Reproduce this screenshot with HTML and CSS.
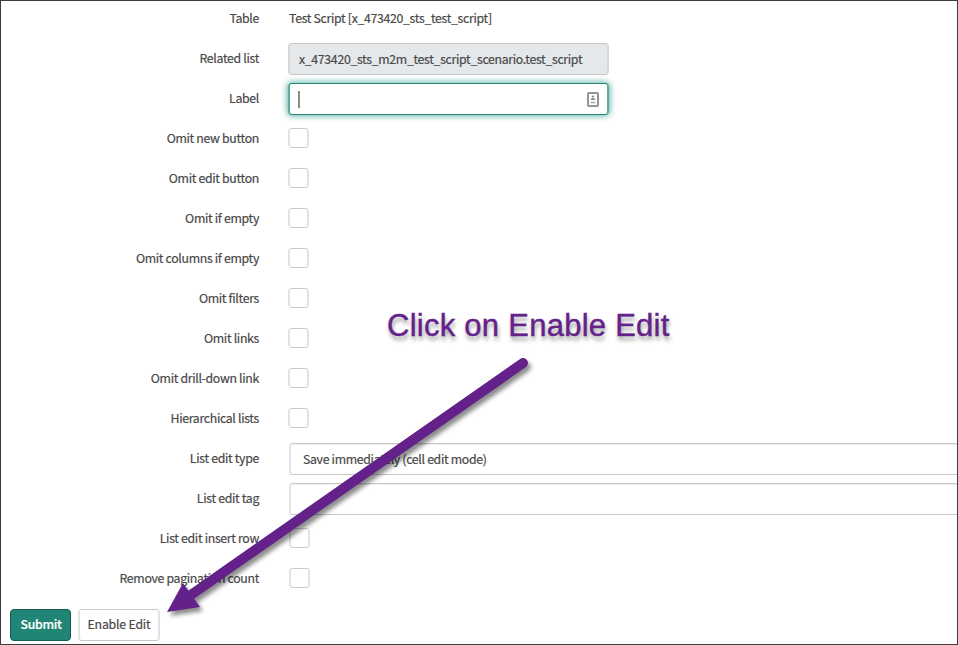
FILE: index.html
```html
<!DOCTYPE html>
<html lang="en">
<head>
<meta charset="utf-8">
<title>Related List</title>
<link rel="stylesheet" href="styles.css">
</head>
<body>
<main class="frame">
  <form class="form">
    <div class="row first"><span class="label">Table</span><span class="value">Test Script [x_473420_sts_test_script]</span></div>
    <div class="row"><span class="label">Related list</span><div class="field readonly">x_473420_sts_m2m_test_script_scenario.test_script</div></div>
    <div class="row"><span class="label">Label</span><div class="field focused"><span class="caret"></span>
      <svg class="card-icon" width="12" height="15" viewBox="0 0 12 15"><rect x="1" y="1" width="10" height="13" rx="1" fill="#fff" stroke="#959595" stroke-width="2"/><circle cx="6" cy="4.6" r="1.1" fill="#888"/><path d="M4 8V6.800Q6 5 8 6.800V8Z" fill="#888"/><path d="M3.500 10.500H8.500" stroke="#aaa" stroke-width="1.500"/></svg></div></div>
    <div class="row"><span class="label">Omit new button</span><span class="check"></span></div>
    <div class="row"><span class="label">Omit edit button</span><span class="check"></span></div>
    <div class="row"><span class="label">Omit if empty</span><span class="check"></span></div>
    <div class="row"><span class="label">Omit columns if empty</span><span class="check"></span></div>
    <div class="row"><span class="label">Omit filters</span><span class="check"></span></div>
    <div class="row"><span class="label">Omit links</span><span class="check"></span></div>
    <div class="row"><span class="label">Omit drill-down link</span><span class="check"></span></div>
    <div class="row"><span class="label">Hierarchical lists</span><span class="check"></span></div>
    <div class="row shifted"><span class="label">List edit type</span><div class="field wide">Save immediately (cell edit mode)</div></div>
    <div class="row shifted"><span class="label">List edit tag</span><div class="field wide"></div></div>
    <div class="row shifted"><span class="label">List edit insert row</span><span class="check"></span></div>
    <div class="row shifted"><span class="label">Remove pagination count</span><span class="check"></span></div>
    <div class="actions"><button type="button" class="btn primary">Submit</button><button type="button" class="btn">Enable Edit</button></div>
  </form>
  <div class="callout">Click on Enable Edit</div>
  <svg class="arrow" width="958" height="645" viewBox="0 0 958 645">
    <path d="M523 363L188 597" stroke="#642189" stroke-width="10" stroke-linecap="round"/>
    <path d="M167 612L183 583L200 607Z" fill="#642189"/>
  </svg>
</main>
</body>
</html>
```

FILE: styles.css
```css
* { box-sizing: border-box; }
body {
  margin: 0;
  background: #fff;
  color: #484848;
  font: 12.3px/20px "Noto Sans CJK SC", sans-serif;
  letter-spacing: -.32px;
  -webkit-text-stroke: .2px currentColor;
}
.frame {
  position: relative;
  width: 958px;
  height: 645px;
  border: 1px solid #3c3c40;
  overflow: hidden;
}
.row {
  display: flex;
  align-items: center;
  height: 40px;
  gap: 29px;
}
.row.first { height: 38px; }
.row.shifted { gap: 30px; }
.label {
  width: 258px;
  flex: none;
  text-align: right;
  white-space: nowrap;
  position: relative;
  top: -1px;
}
.first .label, .value { position: relative; top: -2px; }
.value { left: 1px; }
.field {
  display: flex;
  align-items: center;
  width: 321px;
  height: 32px;
  padding: 0 9px;
  border: 1px solid #c8c8c8;
  border-left: 2px solid #e2e2e2;
  border-right: 2px solid #e2e2e2;
  border-radius: 4px;
  background: #fff;
  white-space: nowrap;
}
.readonly {
  background: #e4e8eb;
  border-left-color: #d5d7d9;
  border-right-color: #d5d7d9;
}
.focused {
  justify-content: space-between;
  padding: 0 8px;
  border-color: #278579;
  border-left-color: #5fa99f;
  border-right-color: #5fa99f;
  box-shadow: 0 0 6px 1px #5fb5a8;
}
.caret { width: 2px; height: 17px; background: #8c8c8c; }
.wide {
  flex: 1;
  padding-left: 12px;
  border-right: 0;
  border-radius: 4px 0 0 4px;
  box-shadow: inset 0 1px 0 #eee;
}
.check {
  width: 21px;
  height: 20px;
  margin-top: -2px;
  border: 1px solid #ccc;
  border-left: 2px solid #e2e2e2;
  border-right: 2px solid #e2e2e2;
  border-radius: 4px;
  background: #fff;
}
.actions {
  display: flex;
  gap: 7px;
  padding: 10px 0 0 9px;
}
.btn {
  width: 82px;
  height: 32px;
  padding: 0 0 2px;
  border: 1px solid #c8c8c8;
  border-left: 2px solid #e2e2e2;
  border-right: 2px solid #e2e2e2;
  border-radius: 4px;
  background: #fff;
  color: #484848;
  font: inherit;
  letter-spacing: -.2px;
  white-space: nowrap;
}
.btn.primary {
  width: 61px;
  padding-left: 1px;
  border: 1px solid #145c52;
  background: #218576;
  color: #fff;
  font-weight: 500;
  letter-spacing: -.3px;
}
.callout {
  position: absolute;
  left: 386px;
  top: 306px;
  color: #642189;
  font: 31px/38px "Liberation Sans", Arial, sans-serif;
  letter-spacing: .26px;
  -webkit-text-stroke: .4px #642189;
  white-space: nowrap;
  text-shadow: 1px 4px 4px rgba(0, 0, 0, .4);
}
.arrow {
  position: absolute;
  left: -1px;
  top: -1px;
  filter: drop-shadow(3px 4px 2px rgba(0, 0, 0, .45));
}
```
